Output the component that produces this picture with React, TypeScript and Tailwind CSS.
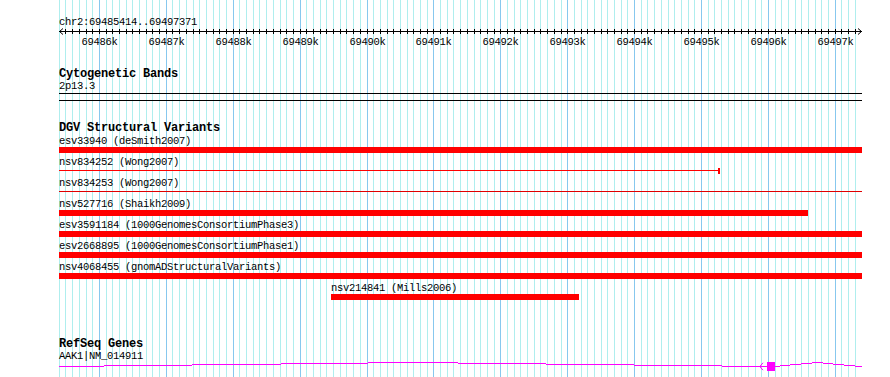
import React from "react";

const START = 69485414;
const X0 = 59.7;
const SCALE = 0.0669;
const TRACK_LEFT = 59;
const TRACK_RIGHT = 862;

const toX = (bp: number) =>
  Math.min(TRACK_RIGHT, Math.max(TRACK_LEFT, Math.round(X0 + (bp - START) * SCALE)));

const gridBps: number[] = [];
for (let bp = 69485400; bp <= 69497300; bp += 100) gridBps.push(bp);

const majorBps = gridBps.filter((bp) => bp % 1000 === 0);

type Variant = {
  id: string;
  study: string;
  start: number;
  end: number;
  kind: "bar" | "line";
  color?: string;
  endTick?: boolean;
};

const variants: Variant[] = [
  { id: "esv33940", study: "deSmith2007", start: 69480000, end: 69510000, kind: "bar" },
  { id: "nsv834252", study: "Wong2007", start: 69480000, end: 69495284, kind: "line", endTick: true },
  { id: "nsv834253", study: "Wong2007", start: 69480000, end: 69510000, kind: "line", color: "#e00000" },
  { id: "nsv527716", study: "Shaikh2009", start: 69480000, end: 69496599, kind: "bar" },
  { id: "esv3591184", study: "1000GenomesConsortiumPhase3", start: 69480000, end: 69510000, kind: "bar" },
  { id: "esv2668895", study: "1000GenomesConsortiumPhase1", start: 69480000, end: 69510000, kind: "bar" },
  { id: "nsv4068455", study: "gnomADStructuralVariants", start: 69480000, end: 69510000, kind: "bar" },
  { id: "nsv214841", study: "Mills2006", start: 69489469, end: 69493176, kind: "bar" },
];

// intron line of AAK1, page coords [x1, x2, y]
const intron: [number, number, number][] = [
  [59, 104, 366], [104, 192, 365], [192, 281, 364], [281, 368, 363], [368, 458, 362],
  [458, 546, 363], [546, 634, 364], [634, 722, 365], [722, 767, 366],
  [775, 780, 366], [780, 790, 365], [790, 801, 364], [801, 812, 363], [812, 823, 362],
  [823, 833, 363], [833, 844, 364], [844, 855, 365], [855, 862, 366],
];

const label = "text-[10.5px] leading-[12px] tracking-[-0.3px] whitespace-pre";
const title = "text-[12px] leading-[12px] font-bold tracking-[-0.2px] whitespace-pre";

const Grid = () => (
  <svg
    className="absolute inset-0 pointer-events-none"
    width={890}
    height={377}
    shapeRendering="crispEdges"
  >
    {gridBps.map((bp) => (
      <rect
        key={bp}
        x={toX(bp)}
        y={0}
        width={1}
        height={377}
        fill={bp % 1000 === 0 ? "#87c8ee" : "#afeeee"}
      />
    ))}
  </svg>
);

const Ruler = () => (
  <svg width={890} height={20} className="block">
    <g shapeRendering="crispEdges">
      <rect x={59} y={3} width={803} height={1} fill="#000" />
      {gridBps.slice(1).map((bp) => (
        <rect key={bp} x={toX(bp)} y={1} width={1} height={5} fill="#000" />
      ))}
    </g>
    <polyline points="63,0.5 59.5,3.5 63,6.5" fill="none" stroke="#000" strokeWidth={1} />
    <polyline points="858,0.5 861.5,3.5 858,6.5" fill="none" stroke="#000" strokeWidth={1} />
    {majorBps.map((bp) => (
      <text
        key={bp}
        x={toX(bp) + 0.5}
        y={17}
        textAnchor="middle"
        fontFamily="'Liberation Mono', monospace"
        fontSize={10.5}
        letterSpacing={-0.3}
        fill="#000"
      >
        {`${bp / 1000}k`}
      </text>
    ))}
  </svg>
);

const VariantRow = ({ v }: { v: Variant }) => {
  const x1 = toX(v.start);
  const x2 = toX(v.end);
  const left = x1 - TRACK_LEFT;
  const width = x2 - x1;
  return (
    <div className="h-[21px] pl-[59px]">
      <div className={`h-[12px] ${label}`} style={{ marginLeft: left }}>
        {v.id} ({v.study})
      </div>
      <div className="relative h-[6px] w-[803px]">
        {v.kind === "bar" ? (
          <div className="absolute top-0 h-[6px] bg-[#ff0000]" style={{ left, width }} />
        ) : (
          <>
            <div
              className="absolute top-[2px] h-px"
              style={{ left, width, background: v.color ?? "#ff0000" }}
            />
            {v.endTick && (
              <div
                className="absolute top-0 h-[6px] w-[2px] bg-[#ff0000]"
                style={{ left: left + width - 2 }}
              />
            )}
          </>
        )}
      </div>
    </div>
  );
};

const GeneModel = () => (
  <svg width={890} height={14} className="block -mt-[2px]">
    <g transform="translate(0,-360)">
      <g shapeRendering="crispEdges">
        {intron.map(([a, b, y], i) => (
          <rect key={i} x={a} y={y} width={b - a} height={1} fill="#ff00ff" />
        ))}
        <rect x={767} y={362} width={8} height={9} fill="#ff00ff" />
      </g>
      <polyline
        points="763,362.8 759.8,366.5 763,370.2"
        fill="none"
        stroke="#ff00ff"
        strokeWidth={1}
      />
    </g>
  </svg>
);

export default function App() {
  return (
    <div className="relative w-[890px] h-[377px] overflow-hidden bg-white text-black font-['Liberation_Mono',monospace]">
      <Grid />
      <div className="relative flex flex-col">
        <div className={`mt-[16px] pl-[59px] ${label}`}>chr2:69485414..69497371</div>
        <Ruler />

        <div className={`mt-[20px] pl-[59px] ${title}`}>Cytogenetic Bands</div>
        <div className={`pl-[59px] ${label}`}>2p13.3</div>
        <div className="ml-[59px] mt-[1px] h-px w-[803px] bg-black" />
        <div className="ml-[59px] mt-[6px] h-px w-[803px] bg-black" />

        <div className={`mt-[21px] pl-[59px] ${title}`}>DGV Structural Variants</div>
        <div className="mt-[1px]">
          {variants.map((v) => (
            <VariantRow key={v.id} v={v} />
          ))}
        </div>

        <div className={`mt-[35px] pl-[59px] ${title}`}>RefSeq Genes</div>
        <div className={`pl-[59px] ${label}`}>AAK1|NM_014911</div>
        <GeneModel />
      </div>
    </div>
  );
}
